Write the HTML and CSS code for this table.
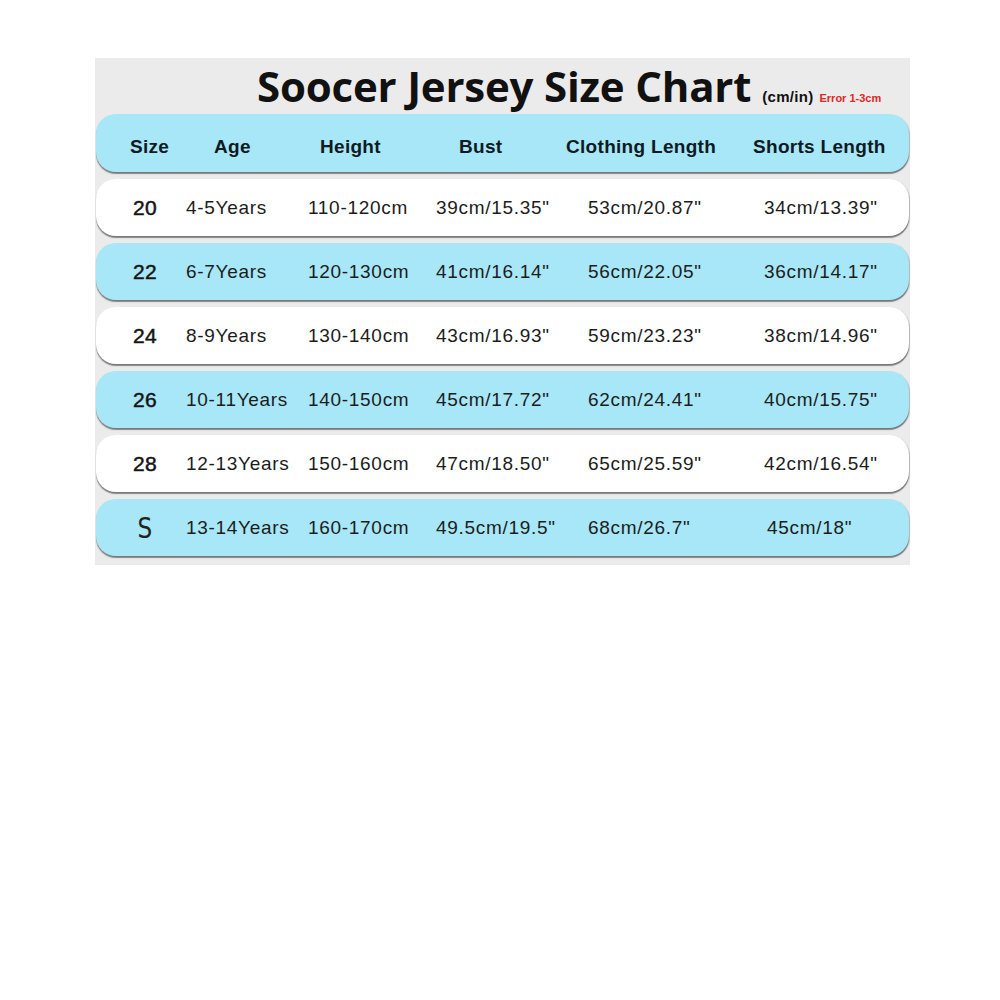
FILE: index.html
```html
<!DOCTYPE html>
<html>
<head>
<meta charset="utf-8">
<link rel="stylesheet" href="styles.css">
</head>
<body>
<div class="page">
  <div class="panel">
    <div class="title-row">
      <span class="title">Soocer Jersey Size Chart</span>
      <span class="unit">(cm/in)</span>
      <span class="error">Error 1-3cm</span>
    </div>
    <div class="rows">
      <div class="row head">
        <span class="h h1">Size</span>
        <span class="h h2">Age</span>
        <span class="h h3">Height</span>
        <span class="h h4">Bust</span>
        <span class="h h5">Clothing Length</span>
        <span class="h h6">Shorts Length</span>
      </div>
      <div class="row white">
        <span class="c c1">20</span><span class="c c2">4-5Years</span><span class="c c3">110-120cm</span><span class="c c4">39cm/15.35"</span><span class="c c5">53cm/20.87"</span><span class="c c6">34cm/13.39"</span>
      </div>
      <div class="row blue">
        <span class="c c1">22</span><span class="c c2">6-7Years</span><span class="c c3">120-130cm</span><span class="c c4">41cm/16.14"</span><span class="c c5">56cm/22.05"</span><span class="c c6">36cm/14.17"</span>
      </div>
      <div class="row white">
        <span class="c c1">24</span><span class="c c2">8-9Years</span><span class="c c3">130-140cm</span><span class="c c4">43cm/16.93"</span><span class="c c5">59cm/23.23"</span><span class="c c6">38cm/14.96"</span>
      </div>
      <div class="row blue">
        <span class="c c1">26</span><span class="c c2">10-11Years</span><span class="c c3">140-150cm</span><span class="c c4">45cm/17.72"</span><span class="c c5">62cm/24.41"</span><span class="c c6">40cm/15.75"</span>
      </div>
      <div class="row white">
        <span class="c c1">28</span><span class="c c2">12-13Years</span><span class="c c3">150-160cm</span><span class="c c4">47cm/18.50"</span><span class="c c5">65cm/25.59"</span><span class="c c6">42cm/16.54"</span>
      </div>
      <div class="row blue">
        <span class="c c1 letter">S</span><span class="c c2">13-14Years</span><span class="c c3">160-170cm</span><span class="c c4">49.5cm/19.5"</span><span class="c c5">68cm/26.7"</span><span class="c c6 narrow">45cm/18"</span>
      </div>
    </div>
  </div>
</div>
</body>
</html>
```

FILE: styles.css
```css
html, body {
  margin: 0;
  padding: 0;
  background: #ffffff;
}

.page {
  width: 1000px;
  height: 1000px;
  padding-top: 58px;
  box-sizing: border-box;
}

.panel {
  margin-left: 95px;
  width: 815px;
  background: #ebebeb;
  padding: 0 1px 9px 1px;
  box-sizing: border-box;
}

.title-row {
  height: 56px;
  display: flex;
  align-items: baseline;
  padding-left: 161px;
  box-sizing: border-box;
  white-space: nowrap;
}

.title {
  flex-shrink: 0;
  font-family: "Open Sans", "DejaVu Sans", sans-serif;
  font-weight: 700;
  font-size: 42px;
  line-height: 56px;
  color: #111111;
  letter-spacing: -0.2px;
}

.unit {
  flex-shrink: 0;
  font-family: "Liberation Sans", Arial, sans-serif;
  font-weight: 700;
  font-size: 15px;
  letter-spacing: 0.3px;
  color: #111111;
  margin-left: 11px;
}

.error {
  flex-shrink: 0;
  font-family: "Liberation Sans", Arial, sans-serif;
  font-weight: 700;
  font-size: 11px;
  color: #e0261f;
  margin-left: 6px;
}

.rows {
  display: flex;
  flex-direction: column;
  gap: 7px;
}

.row {
  height: 57px;
  border-radius: 20px;
  display: flex;
  align-items: center;
  box-sizing: border-box;
  box-shadow: 0 2px 1px rgba(60, 60, 60, 0.55), 1px 1px 1px rgba(80, 80, 80, 0.3);
  font-family: "Liberation Sans", Arial, sans-serif;
  white-space: nowrap;
}

.head {
  height: 58px;
  background: #a7e7f8;
  padding-left: 34px;
  padding-top: 8px;
}

.blue {
  background: #a7e7f8;
}

.white {
  background: #ffffff;
}

.h {
  font-weight: 700;
  font-size: 19px;
  letter-spacing: 0.3px;
  color: #0f1a22;
}

.h1 { width: 84px; }
.h2 { width: 106px; }
.h3 { width: 139px; }
.h4 { width: 107px; }
.h5 { width: 187px; }
.h6 { width: auto; }

.row.white, .row.blue {
  padding-left: 8px;
}

.c {
  font-size: 19px;
  letter-spacing: 0.7px;
  color: #1c1c1c;
}

.c1 {
  width: 82px;
  text-align: center;
  font-size: 21px;
  letter-spacing: 0.4px;
  -webkit-text-stroke: 0.5px #1c1c1c;
  color: #111111;
}

.c1.letter {
  font-family: "DejaVu Sans", sans-serif;
  font-size: 29px;
  -webkit-text-stroke: 0;
  transform: scaleX(0.8);
  color: #222222;
}

.c2 { width: 122px; }
.c3 { width: 128px; }
.c4 { width: 152px; }
.c5 { width: 176px; }
.c6 { width: auto; }

.c6.narrow {
  padding-left: 3px;
}
```
